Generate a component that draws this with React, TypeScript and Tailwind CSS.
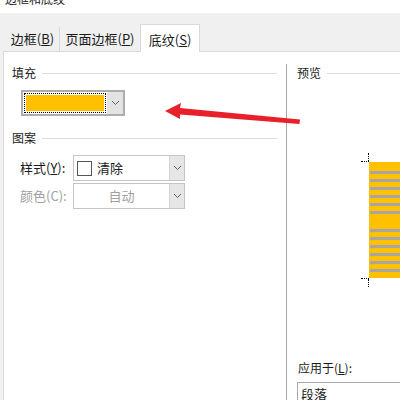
import React from "react";

function Chevron() {
  return (
    <svg width="9" height="6" viewBox="0 0 9 6" className="text-[#606060]">
      <path d="M1 1 L4.5 4.5 L8 1" fill="none" stroke="currentColor" strokeWidth="1" />
    </svg>
  );
}

function SectionLabel({ text }: { text: string }) {
  return (
    <div className="flex h-[16px] items-center">
      <span className="leading-[16px]">{text}</span>
      <div className="ml-[6px] h-px flex-1 bg-[#dcdcdc]" />
    </div>
  );
}

const stripes = [0, 1, 2, 3, 4, 5];

export default function App() {
  return (
    <div className="relative flex h-[400px] w-[400px] flex-col overflow-hidden bg-[#f0f0f0] font-['Noto_Sans_CJK_SC','Liberation_Sans',sans-serif] text-[12px] text-[#1a1a1a]">
      {/* title bar, cut off */}
      <div className="h-[13px] shrink-0 overflow-hidden bg-white">
        <div className="-mt-[9px] pl-[5px] leading-[16px]">边框和底纹</div>
      </div>

      {/* tabs */}
      <div className="flex h-[38px] shrink-0 items-end">
        <div className="flex h-[24px] w-[60px] items-center justify-center border-r border-[#d9d9d9] pl-[6px] text-[13px]">
          边框(<span className="underline">B</span>)
        </div>
        <div className="flex h-[24px] w-[80px] items-center justify-center text-[13px]">
          页面边框(<span className="underline">P</span>)
        </div>
        <div className="relative z-10 -mb-px flex h-[28px] w-[60px] items-center justify-center border border-b-0 border-[#d9d9d9] bg-white pt-[2px] text-[13px]">
          底纹(<span className="underline">S</span>)
        </div>
      </div>

      {/* panel */}
      <div className="ml-[3px] flex flex-1 border-l border-t border-[#d9d9d9] bg-white">
        {/* left column */}
        <div className="w-[282px] shrink-0 pr-[9px]">
          <div className="mt-[13px] pl-[8px]">
            <SectionLabel text="填充" />
          </div>

          {/* fill combo */}
          <div className="ml-[17px] mt-[9px] flex h-[26px] w-[104px] border-2 border-[#adadad] bg-white">
            <div className="m-px flex-1 border border-dotted border-black p-px">
              <div className="h-full w-full bg-[#ffc000]" />
            </div>
            <div className="flex w-[16px] items-center justify-center bg-[#e3e3e3]">
              <Chevron />
            </div>
          </div>

          <div className="mt-[14px] pl-[8px]">
            <SectionLabel text="图案" />
          </div>

          {/* style */}
          <div className="mt-[9px] flex items-center pl-[16px]">
            <span className="w-[53px] text-[13px]">
              样式(<span className="underline">Y</span>):
            </span>
            <div className="flex h-[26px] w-[112px] border border-[#c4c4c4] bg-white">
              <div className="flex flex-1 items-center pl-[3px]">
                <div className="h-[15px] w-[15px] border border-[#555]" />
                <span className="ml-[5px] text-[13px]">清除</span>
              </div>
              <div className="flex w-[15px] items-center justify-center border-l border-[#d4d4d4] bg-[#e6e6e6]">
                <Chevron />
              </div>
            </div>
          </div>

          {/* colour */}
          <div className="mt-[2px] flex items-center pl-[16px]">
            <span className="w-[53px] text-[13px] text-[#a0a0a0]">颜色(C):</span>
            <div className="flex h-[26px] w-[112px] border border-[#c4c4c4] bg-white">
              <div className="flex flex-1 items-center justify-center text-[13px] text-[#a0a0a0]">自动</div>
              <div className="flex w-[15px] items-center justify-center border-l border-[#d4d4d4] bg-[#e6e6e6]">
                <Chevron />
              </div>
            </div>
          </div>
        </div>

        {/* preview column */}
        <div className="mt-[12px] flex-1 border-l border-[#a8a8a8]">
          <div className="mt-[1px] pl-[10px]">
            <SectionLabel text="预览" />
          </div>

          <div className="relative ml-[82px] mt-[81px] w-[40px] bg-[#ffc000] pb-[6px] pl-px pt-[9px]">
            <div className="absolute -left-[8px] -top-[1px] w-[8px] border-t border-dotted border-black" />
            <div className="absolute -left-px -top-[9px] h-[8px] border-l border-dotted border-black" />
            <div className="absolute -bottom-px -left-[8px] w-[8px] border-t border-dotted border-black" />
            <div className="absolute -bottom-[9px] -left-px h-[8px] border-l border-dotted border-black" />
            <div className="flex flex-col gap-[5px]">
              {stripes.map((i) => (
                <div key={i} className="h-[3px] bg-[#a6a6a6]" />
              ))}
            </div>
            <div className="mt-[15px] flex flex-col gap-[5px]">
              {stripes.map((i) => (
                <div key={i} className="h-[3px] bg-[#a6a6a6]" />
              ))}
            </div>
          </div>

          <div className="mt-[82px] pl-[11px] leading-[16px]">
            应用于(<span className="underline">L</span>):
          </div>
          <div className="ml-[10px] mt-[6px] h-[30px] border-l border-t border-[#a8a8a8] pl-[3px] pt-[1px] text-[13px]">
            段落
          </div>
        </div>
      </div>

      {/* red arrow annotation */}
      <svg className="pointer-events-none absolute left-0 top-0" width="400" height="400" viewBox="0 0 400 400">
        <path d="M165 111 L181 103 L180 108 L300 119.5 L299.5 124 L180 114.5 L180 119 Z" fill="#e8202b" />
      </svg>
    </div>
  );
}
